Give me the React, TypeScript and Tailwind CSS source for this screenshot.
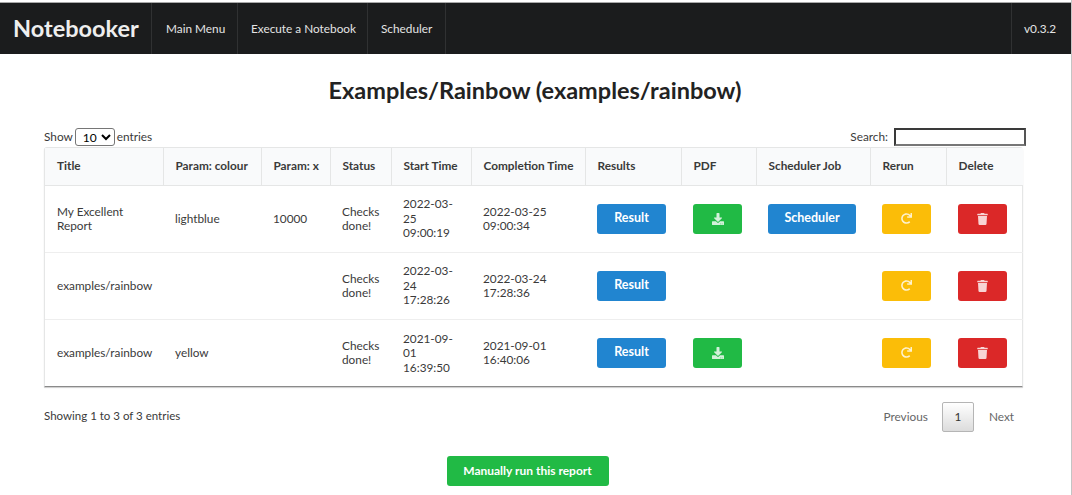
import { FaDownload, FaRedo, FaTrash } from "react-icons/fa";

const rows = [
    { title: "My Excellent Report", colour: "lightblue", x: "10000", start: "2022-03-25 09:00:19", end: "2022-03-25 09:00:34", pdf: true, scheduler: true, del: true },
    { title: "examples/rainbow", colour: "", x: "", start: "2022-03-24 17:28:26", end: "2022-03-24 17:28:36", pdf: false, scheduler: false, del: true },
    { title: "examples/rainbow", colour: "yellow", x: "", start: "2021-09-01 16:39:50", end: "2021-09-01 16:40:06", pdf: true, scheduler: false, del: true },
];

const headers = ["Title", "Param: colour", "Param: x", "Status", "Start Time", "Completion Time", "Results", "PDF", "Scheduler Job", "Rerun", "Delete"];
const widths = ["w-[118px]", "w-[98px]", "w-[69px]", "w-[61px]", "w-[80px]", "w-[114px]", "w-[96px]", "w-[75px]", "w-[114px]", "w-[76px]", "w-[77px]"];

const btn = "h-[30px] flex items-center justify-center rounded-[3px] text-white font-bold text-[12.5px]";

export default function App() {
    return (
        <div className="h-[495px] overflow-hidden bg-white pt-[2px] border-r border-[#c4c4c4] font-['Lato','Open_Sans',sans-serif] text-[11.8px] text-[#3a3a3a]">
            <nav className="flex h-[52px] bg-[#1b1c1d] border-t border-[#a9a9a9] text-[#e4e4e4]">
                <div className="w-[152px] flex items-center pl-[13px] text-[23.5px] font-bold text-[#eeeeee] border-r border-[#303132]">Notebooker</div>
                <div className="w-[86px] flex items-center pl-[14px] border-r border-[#303132]">Main Menu</div>
                <div className="w-[130px] flex items-center pl-[13px] border-r border-[#303132]">Execute a Notebook</div>
                <div className="w-[78px] flex items-center pl-[13px] border-r border-[#303132]">Scheduler</div>
                <div className="ml-auto w-[60px] flex items-center pl-[12px] border-l border-[#303132]">v0.3.2</div>
            </nav>

            <h1 className="mt-[21px] h-[30px] leading-[30px] text-center text-[23.5px] font-bold text-[#222222] pr-[1px]">Examples/Rainbow (examples/rainbow)</h1>

            <div className="mt-[23px] ml-[44px] w-[982px]">
                <div className="flex items-center justify-between h-[18px]">
                    <div className="flex items-center gap-[2px]">
                        <span>Show</span>
                        <select className="w-[40px] h-[18px] border border-[#767676] rounded-[3px] text-[12px] text-black pl-[3px]" defaultValue="10">
                            <option>10</option>
                        </select>
                        <span>entries</span>
                    </div>
                    <div className="flex items-center gap-[6px]">
                        <span>Search:</span>
                        <input className="w-[132px] h-[18px] border-2 border-t-[#3a3a3a] border-l-[#3a3a3a] border-r-[#555555] border-b-[#777777] bg-white" />
                    </div>
                </div>

                <div className="w-[979px] mt-[1px] border border-[#e5e6e6] border-b-[#8a8a8a] rounded-t-[3px] shadow-[0_1px_1px_rgba(0,0,0,0.2)]">
                    <table className="w-full table-fixed border-collapse">
                        <colgroup>
                            {widths.map((w, i) => <col key={i} className={w} />)}
                        </colgroup>
                        <thead>
                            <tr className="h-[37px] bg-[#f9fafb] border-b border-[#e5e6e6]">
                                {headers.map((h, i) => (
                                    <th key={h} className={`text-left font-bold whitespace-nowrap pl-[12px] ${i < 10 ? "border-r border-[#e5e6e6]" : ""}`}>{h}</th>
                                ))}
                            </tr>
                        </thead>
                        <tbody>
                            {rows.map((r, i) => (
                                <tr key={i} className={`h-[67px] ${i < 2 ? "border-b border-[#eeeeee]" : ""}`}>
                                    <td className="pl-[12px] pr-[12px] pt-[1px] leading-[14.5px]">{r.title}</td>
                                    <td className="pl-[12px] pt-[1px] leading-[14.5px]">{r.colour}</td>
                                    <td className="pl-[12px] pt-[1px] leading-[14.5px]">{r.x}</td>
                                    <td className="pl-[12px] pr-[6px] pt-[1px] leading-[14.5px]">Checks done!</td>
                                    <td className="pl-[12px] pr-[10px] pt-[1px] leading-[14.5px]">{r.start}</td>
                                    <td className="pl-[12px] pr-[30px] pt-[1px] leading-[14.5px]">{r.end}</td>
                                    <td className="pl-[12px]">
                                        <button className={`${btn} w-[69px] bg-[#2185d0]`}>Result</button>
                                    </td>
                                    <td className="pl-[12px]">
                                        {r.pdf && (
                                            <button className={`${btn} w-[49px] bg-[#21ba45]`}><FaDownload className="w-[12px] h-[12px] text-white/80" /></button>
                                        )}
                                    </td>
                                    <td className="pl-[12px]">
                                        {r.scheduler && (
                                            <button className={`${btn} w-[88px] bg-[#2185d0]`}>Scheduler</button>
                                        )}
                                    </td>
                                    <td className="pl-[12px]">
                                        <button className={`${btn} w-[49px] bg-[#fbbd08]`}><FaRedo className="w-[11px] h-[11px] text-white/80" /></button>
                                    </td>
                                    <td className="pl-[12px]">
                                        <button className={`${btn} w-[49px] bg-[#db2828]`}><FaTrash className="w-[11px] h-[12px] text-white/80" /></button>
                                    </td>
                                </tr>
                            ))}
                        </tbody>
                    </table>
                </div>

                <div className="w-[979px] mt-[15px] flex items-center justify-between h-[30px]">
                    <span className="pb-[2px] text-[11.5px]">Showing 1 to 3 of 3 entries</span>
                    <div className="flex items-center text-[#555555]">
                        <span className="mr-[14px] text-[#666666]">Previous</span>
                        <span className="w-[32px] h-[30px] flex items-center justify-center border border-[#b5b5b5] rounded-[2px] bg-gradient-to-b from-white to-[#dcdcdc] text-[#333333]">1</span>
                        <span className="ml-[15px] mr-[9px] text-[#666666]">Next</span>
                    </div>
                </div>

                <div className="w-[967px] mt-[24px] flex justify-center">
                    <button className={`${btn} w-[162px] bg-[#21ba45] text-[12px]`}>Manually run this report</button>
                </div>
            </div>
        </div>
    );
}
